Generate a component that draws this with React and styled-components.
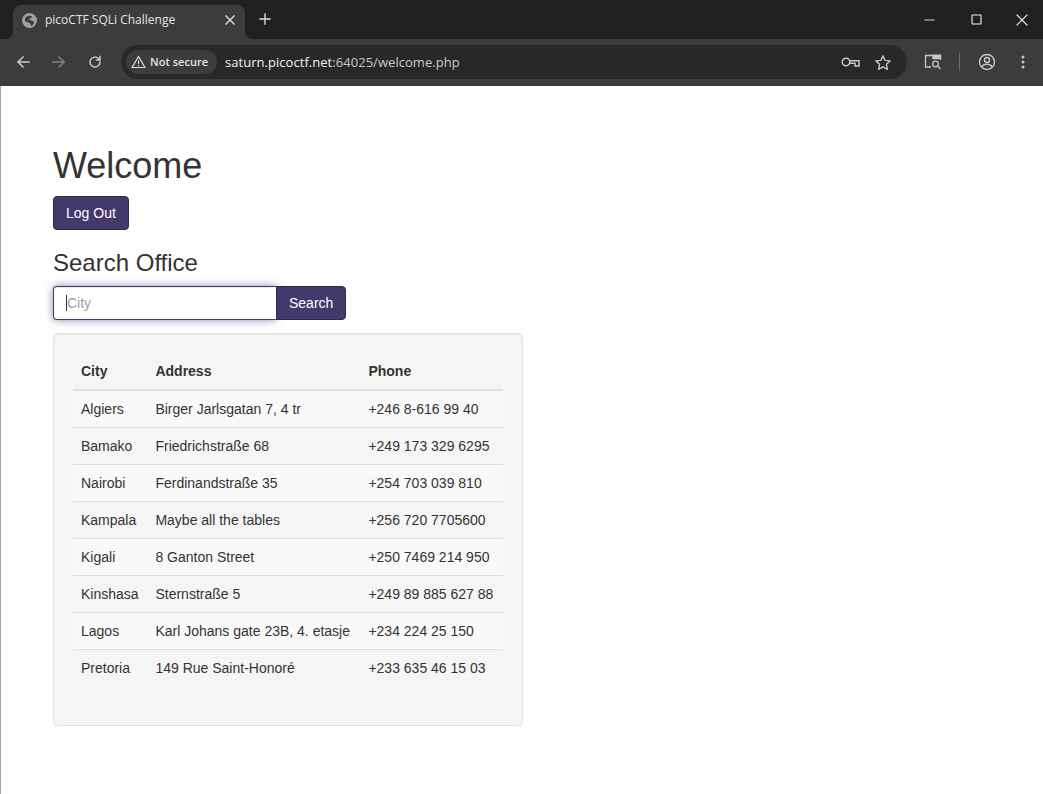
import React from "react";
import styled, { createGlobalStyle } from "styled-components";

const Global = createGlobalStyle`
  html, body { margin: 0; padding: 0; background: #fff; }
  body { font-family: "Liberation Sans", Arial, sans-serif; font-size: 14px; line-height: 20px; color: #333; }
  * { box-sizing: border-box; }
`;

const Window = styled.div`
  width: 1043px;
  height: 794px;
  overflow: hidden;
  display: flex;
  flex-direction: column;
`;
const TabStrip = styled.div`
  height: 39px;
  flex: none;
  background: #1f2020;
  display: flex;
  align-items: flex-end;
  padding-left: 13px;
`;
const Tab = styled.div`
  position: relative;
  width: 232px;
  height: 34px;
  background: #3c3c3c;
  border-radius: 8px 8px 0 0;
  display: flex;
  align-items: center;
  padding: 0 10px 4px 9px;
  color: #e3e3e3;
  font: 12px/16px "Open Sans", "Noto Sans", sans-serif;
  &::before, &::after {
    content: "";
    position: absolute;
    bottom: 0;
    width: 8px;
    height: 8px;
  }
  &::before { left: -8px; background: radial-gradient(circle at 0 0, transparent 8px, #3c3c3c 8.5px); }
  &::after { right: -8px; background: radial-gradient(circle at 100% 0, transparent 8px, #3c3c3c 8.5px); }
`;
const TabTitle = styled.span`
  flex: 1;
  margin-left: 8px;
  white-space: nowrap;
`;
const NewTab = styled.div`
  width: 16px;
  height: 16px;
  margin: 0 0 12px 12px;
  color: #dcdcdc;
  display: flex;
`;
const WinControls = styled.div`
  margin-left: auto;
  margin-right: -2px;
  height: 39px;
  display: flex;
  align-items: center;
  color: #e6e6e6;
`;
const WinButton = styled.div`
  width: 46px;
  height: 39px;
  display: flex;
  align-items: center;
  justify-content: center;
  color: ${(p) => p.$color || "#efefef"};
`;
const Toolbar = styled.div`
  height: 47px;
  flex: none;
  background: #3c3c3c;
  display: flex;
  align-items: center;
  padding: 0 0 1px 0;
`;
const NavButton = styled.div`
  width: 36px;
  height: 36px;
  display: flex;
  align-items: center;
  justify-content: center;
  color: ${(p) => (p.$off ? "#7f7f7f" : "#c7c7c7")};
`;
const NavGroup = styled.div`
  display: flex;
  margin-left: 5px;
  width: 116px;
`;
const Omnibox = styled.div`
  width: 786px;
  height: 34px;
  border-radius: 17px;
  background: #282828;
  display: flex;
  align-items: center;
  padding: 0 15px 0 5px;
`;
const Chip = styled.div`
  width: 91px;
  height: 24px;
  flex: none;
  border-radius: 12px;
  background: #3c3c3c;
  color: #e3e3e3;
  display: flex;
  align-items: center;
  gap: 4px;
  padding-left: 5px;
  font: 600 11px/14px "Open Sans", "Noto Sans", sans-serif;
  letter-spacing: 0.03px;
  white-space: nowrap;
`;
const Url = styled.div`
  margin-left: 8px;
  font: 13px/18px "Open Sans", "Noto Sans", sans-serif;
  letter-spacing: 0.04px;
  color: #c7c7c7;
  white-space: nowrap;
  b { font-weight: 400; color: #f0f0f0; }
`;
const OmniIcons = styled.div`
  margin-left: auto;
  display: flex;
  align-items: center;
  gap: 14px;
  color: #c7c7c7;
`;
const RightTools = styled.div`
  display: flex;
  align-items: center;
  color: #c7c7c7;
  margin-left: 17px;
`;
const Divider = styled.div`
  width: 1px;
  height: 18px;
  background: #6a6a6a;
  margin: 0 18px 0 17px;
`;
const Page = styled.main`
  flex: 1;
  background: #fff;
  border-left: 1px solid #a8a8a8;
  padding: 60px 0 0 52px;
`;
const Title = styled.h1`
  margin: 0 0 10px;
  font-size: 36px;
  font-weight: 500;
  line-height: 39.6px;
  color: #333;
`;
const Subtitle = styled.h3`
  margin: 20px 0 10px;
  font-size: 24px;
  font-weight: 500;
  line-height: 26.4px;
  color: #333;
`;
const Button = styled.button`
  height: 34px;
  padding: 6px 12px;
  font: 14px/20px "Liberation Sans", Arial, sans-serif;
  color: #fff;
  background: #433a6b;
  border: 1px solid #2e2750;
  border-radius: ${(p) => p.$radius || "4px"};
  display: block;
`;
const SearchRow = styled.form`
  display: flex;
  margin: 0 0 13px;
`;
const Field = styled.div`
  width: 223px;
  height: 34px;
  background: #fff;
  border: 1px solid #433a6b;
  border-right: 0;
  border-radius: 4px 0 0 4px;
  padding: 6px 12px;
  color: #a0a0a0;
  box-shadow: 0 0 8px rgba(67, 58, 107, 0.6), inset 0 1px 1px rgba(0, 0, 0, 0.075);
  display: flex;
  align-items: center;
  position: relative;
  z-index: 1;
`;
const Caret = styled.span`
  width: 1px;
  height: 16px;
  background: #333;
`;
const Well = styled.section`
  width: 470px;
  height: 393px;
  padding: 19px;
  background: #f5f5f5;
  border: 1px solid #e3e3e3;
  border-radius: 4px;
  box-shadow: inset 0 1px 1px rgba(0, 0, 0, 0.05);
`;
const Table = styled.table`
  width: 100%;
  border-collapse: collapse;
  border-spacing: 0;
`;
const Th = styled.th`
  text-align: left;
  padding: 8px;
  line-height: 20px;
  border-bottom: 2px solid #ddd;
  white-space: nowrap;
`;
const Td = styled.td`
  padding: 8px;
  line-height: 20px;
  white-space: nowrap;
  border-top: ${(p) => (p.$first ? "0" : "1px solid #ddd")};
`;
const Row = styled.tr`
  background: ${(p) => (p.$odd ? "#f9f9f9" : "transparent")};
`;

const rows = [
  ["Algiers", "Birger Jarlsgatan 7, 4 tr", "+246 8-616 99 40"],
  ["Bamako", "Friedrichstraße 68", "+249 173 329 6295"],
  ["Nairobi", "Ferdinandstraße 35", "+254 703 039 810"],
  ["Kampala", "Maybe all the tables", "+256 720 7705600"],
  ["Kigali", "8 Ganton Street", "+250 7469 214 950"],
  ["Kinshasa", "Sternstraße 5", "+249 89 885 627 88"],
  ["Lagos", "Karl Johans gate 23B, 4. etasje", "+234 224 25 150"],
  ["Pretoria", "149 Rue Saint-Honoré", "+233 635 46 15 03"],
];

const Svg = ({ s = 16, children, sw = 1.5 }) => (
  <svg width={s} height={s} viewBox={`0 0 ${s} ${s}`} fill="none" stroke="currentColor" strokeWidth={sw} strokeLinecap="square">
    {children}
  </svg>
);

export default function App() {
  return (
    <Window>
      <Global />
      <TabStrip>
        <Tab>
          <svg width="15" height="15" viewBox="0 0 16 16" style={{ flex: "none" }}>
            <circle cx="8" cy="8" r="8" fill="#9aa0a6" />
            <path d="M3 6.500c1-2.500 3-3.500 5-3.500l3 .5-1.500 2-2 .5 1 1.500 3 1 1.500 1.500c-.5 2-2 3-3.500 3.500L8.500 11 5.500 9.500 3.500 9z" fill="#3c3c3c" />
          </svg>
          <TabTitle>picoCTF SQLi Challenge</TabTitle>
          <Svg s={10} sw={1.3}><path d="M1 1l8 8M9 1l-8 8" /></Svg>
        </Tab>
        <NewTab>
          <Svg s={16} sw={1.4}><path d="M8 3v10M3 8h10" /></Svg>
        </NewTab>
        <WinControls>
          <WinButton $color="#a8a8a8"><Svg s={12} sw={1.3}><path d="M1 6h9" /></Svg></WinButton>
          <WinButton><Svg s={11} sw={1.1}><rect x="1" y="1" width="9" height="9" rx="0.5" /></Svg></WinButton>
          <WinButton><Svg s={12} sw={1.1}><path d="M1 1l10 10M11 1L1 11" /></Svg></WinButton>
        </WinControls>
      </TabStrip>
      <Toolbar>
        <NavGroup>
          <NavButton>
            <Svg s={16} sw={1.5}><path d="M14 8H3M8 3L3 8l5 5" /></Svg>
          </NavButton>
          <NavButton $off>
            <Svg s={16} sw={1.5}><path d="M2 8h11M8 3l5 5-5 5" /></Svg>
          </NavButton>
          <NavButton>
            <Svg s={16} sw={1.5}><path d="M13 8a5 5 0 1 1-1.500-3.500L13 6M13 2.500V6H9.500" /></Svg>
          </NavButton>
        </NavGroup>
        <Omnibox>
          <Chip>
            <svg width="15" height="14" viewBox="0 0 15 14" fill="none" stroke="currentColor" strokeWidth="1.200" strokeLinejoin="round" style={{ flex: "none" }}>
              <path d="M7.500 1.500L14 12.500H1z" />
              <path d="M7.500 5.500v3.500M7.500 10v1" />
            </svg>
            Not secure
          </Chip>
          <Url><b>saturn.picoctf.net</b>:64025/welcome.php</Url>
          <OmniIcons>
            <svg width="19" height="12" viewBox="0 0 19 12" fill="none" stroke="currentColor" strokeWidth="1.500">
              <circle cx="5" cy="6" r="3.750" />
              <path d="M8.700 4.750H18V10h-4V7.250H8.700" />
            </svg>
            <svg width="18" height="17" viewBox="0 0 18 17" fill="none" stroke="currentColor" strokeWidth="1.400" strokeLinejoin="round">
              <path d="M9 1.800l2.100 4.600 5 .5-3.700 3.400 1 5L9 12.800l-4.400 2.500 1-5L1.900 6.900l5-.5z" />
            </svg>
          </OmniIcons>
        </Omnibox>
        <RightTools>
          <svg width="18" height="16" viewBox="0 0 18 16" fill="none" stroke="currentColor" strokeWidth="1.300">
            <path d="M7 13H1.500V1.500h15V6" />
            <path d="M9 1.500h7.500V4.500H9z" fill="currentColor" />
            <circle cx="11.500" cy="10" r="2.800" />
            <path d="M13.500 12l3 3" />
          </svg>
          <Divider />
          <svg width="18" height="18" viewBox="0 0 18 18" fill="none" stroke="currentColor" strokeWidth="1.400">
            <circle cx="9" cy="9" r="7.500" />
            <circle cx="9" cy="7" r="2.500" />
            <path d="M3.800 14c1-2 3-2.700 5.200-2.700s4.200.7 5.200 2.700" />
          </svg>
          <svg width="4" height="14" viewBox="0 0 4 14" fill="currentColor" style={{ marginLeft: 25 }}>
            <circle cx="2" cy="2" r="1.500" />
            <circle cx="2" cy="7" r="1.500" />
            <circle cx="2" cy="12" r="1.500" />
          </svg>
        </RightTools>
      </Toolbar>
      <Page>
        <Title>Welcome</Title>
        <Button type="button">Log Out</Button>
        <Subtitle>Search Office</Subtitle>
        <SearchRow>
          <Field><Caret />City</Field>
          <Button type="button" $radius="0 4px 4px 0">Search</Button>
        </SearchRow>
        <Well>
          <Table>
            <thead>
              <tr>
                <Th>City</Th>
                <Th>Address</Th>
                <Th>Phone</Th>
              </tr>
            </thead>
            <tbody>
              {rows.map((r, i) => (
                <Row key={r[0]} $odd={i % 2 === 0}>
                  <Td $first={i === 0}>{r[0]}</Td>
                  <Td $first={i === 0}>{r[1]}</Td>
                  <Td $first={i === 0}>{r[2]}</Td>
                </Row>
              ))}
            </tbody>
          </Table>
        </Well>
      </Page>
    </Window>
  );
}
